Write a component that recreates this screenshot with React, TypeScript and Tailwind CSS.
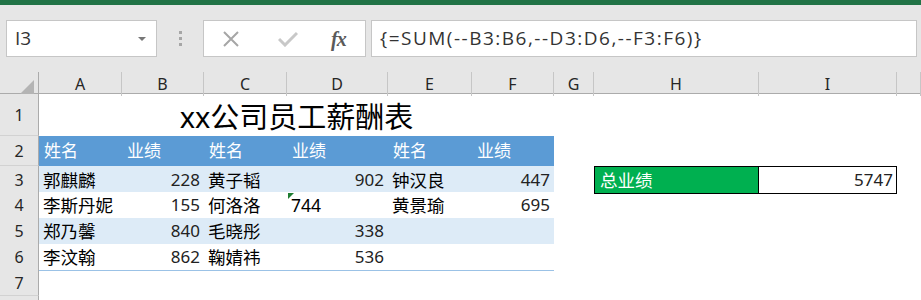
import React from "react";

type Cell = string | number;
type Row = { n: number; cells: Cell[]; band: boolean };

const rows: Row[] = [
  { n: 3, cells: ["郭麒麟", 228, "黄子韬", 902, "钟汉良", 447], band: true },
  { n: 4, cells: ["李斯丹妮", 155, "何洛洛", "744", "黄景瑜", 695], band: false },
  { n: 5, cells: ["郑乃馨", 840, "毛晓彤", 338, "", ""], band: true },
  { n: 6, cells: ["李汶翰", 862, "鞠婧祎", 536, "", ""], band: false },
];

const letters = ["A", "B", "C", "D", "E", "F", "G", "H", "I", ""];

function RowHead({ n }: { n?: number }) {
  return (
    <div className="flex items-center justify-center bg-[#e6e6e6] border-r border-r-[#ababab] border-b border-b-[#d2d2d2] text-[16px] text-[#262626]">
      {n}
    </div>
  );
}

export default function App() {
  return (
    <div className="w-[921px] h-[300px] overflow-hidden bg-white font-['Noto_Sans','Noto_Sans_CJK_SC',sans-serif]">
      {/* title bar strip */}
      <div className="h-[5px] bg-[#217346]" />

      {/* formula bar */}
      <div className="h-[67px] bg-[#e6e6e6] pt-[15px] pl-[6px] flex items-start">
        <div className="w-[151px] h-[37px] bg-white border border-[#c6c6c6] flex items-center justify-between pl-[8px] pr-[10px]">
          <span className="text-[19px] text-[#333] font-['Open_Sans',sans-serif]">I3</span>
          <span className="w-0 h-0 border-x-[4px] border-x-transparent border-t-[4px] border-t-[#777]" />
        </div>
        <div className="w-[46px] h-[37px] flex flex-col items-center justify-center gap-[3px]">
          <span className="w-[3px] h-[3px] bg-[#a6a6a6]" />
          <span className="w-[3px] h-[3px] bg-[#a6a6a6]" />
          <span className="w-[3px] h-[3px] bg-[#a6a6a6]" />
        </div>
        <div className="w-[163px] h-[37px] bg-white border border-[#c6c6c6] flex items-center">
          <svg width="18" height="18" viewBox="0 0 18 18" className="ml-[18px]">
            <path d="M2 2 L16 16 M16 2 L2 16" stroke="#a6a6a6" strokeWidth="2" fill="none" />
          </svg>
          <svg width="20" height="16" viewBox="0 0 20 16" className="ml-[38px]">
            <path d="M1 8 L7 14 L19 2" stroke="#c8c8c8" strokeWidth="3" fill="none" />
          </svg>
          <span className="ml-[33px] text-[20px] italic font-bold text-[#5a5a5a] font-['Liberation_Serif',serif] tracking-[-1px]">
            fx
          </span>
        </div>
        <div className="ml-[5px] w-[546px] h-[37px] bg-white border border-[#c6c6c6] flex items-center pl-[8px]">
          <span className="text-[19px] text-[#333] font-['Open_Sans',sans-serif] tracking-[1.5px]">
            {"{=SUM(--B3:B6,--D3:D6,--F3:F6)}"}
          </span>
        </div>
      </div>

      {/* column headers */}
      <div className="grid grid-cols-[39px_83px_82px_83px_101px_84px_82px_40px_165px_138px_1fr] h-[22px] bg-[#e6e6e6] border-b border-b-[#ababab]">
        <div className="relative border-r border-r-[#ababab]">
          <svg width="14" height="14" viewBox="0 0 14 14" className="absolute right-[4px] bottom-[2px]">
            <path d="M14 0 L14 14 L0 14 Z" fill="#b4b4b4" />
          </svg>
        </div>
        {letters.map((l, i) => (
          <div
            key={i}
            className="flex items-center justify-center border-r border-r-[#c6c6c6] text-[16px] text-[#262626]"
          >
            {l}
          </div>
        ))}
      </div>

      {/* row 1: title */}
      <div className="grid grid-cols-[39px_83px_82px_83px_101px_84px_82px_40px_165px_138px_1fr] h-[42px]">
        <RowHead n={1} />
        <div className="col-span-6 flex items-end justify-center pb-[5px] text-[29px] leading-none text-black">
          xx公司员工薪酬表
        </div>
        <div className="col-span-4" />
      </div>

      {/* row 2: table header */}
      <div className="grid grid-cols-[39px_83px_82px_83px_101px_84px_82px_40px_165px_138px_1fr] h-[30px]">
        <RowHead n={2} />
        {["姓名", "业绩", "姓名", "业绩", "姓名", "业绩"].map((h, i) => (
          <div key={i} className="bg-[#5b9bd5] text-white text-[17px] flex items-center pl-[5px]">
            {h}
          </div>
        ))}
        <div className="col-span-4" />
      </div>

      {/* data rows */}
      {rows.map((r) => (
        <div
          key={r.n}
          className="grid grid-cols-[39px_83px_82px_83px_101px_84px_82px_40px_165px_138px_1fr] h-[26px]"
        >
          <RowHead n={r.n} />
          {r.cells.map((c, i) => {
            const isNum = typeof c === "number";
            const textNum = r.n === 4 && i === 3;
            return (
              <div
                key={i}
                className={`relative flex items-center border-b border-b-[#9bc2e6] ${
                  r.band ? "bg-[#ddebf7]" : "bg-white"
                } ${isNum ? "justify-end pr-[4px] text-[17px] text-[#222]" : "pl-[4px] text-[17.5px] text-black"}`}
              >
                {textNum && (
                  <span className="absolute left-[1px] top-[1px] w-0 h-0 border-r-[6px] border-r-transparent border-t-[6px] border-t-[#1e7d32]" />
                )}
                {c}
              </div>
            );
          })}
          <div />
          {r.n === 3 ? (
            <>
              <div className="bg-[#00b050] border border-black flex items-center pl-[5px] text-white text-[17.5px]">
                总业绩
              </div>
              <div className="bg-white border-y border-r border-black flex items-center justify-end pr-[3px] text-[17px] text-[#222]">
                5747
              </div>
            </>
          ) : (
            <>
              <div />
              <div />
            </>
          )}
          <div />
        </div>
      ))}

      {/* empty rows */}
      <div className="grid grid-cols-[39px_83px_82px_83px_101px_84px_82px_40px_165px_138px_1fr] h-[26px]">
        <RowHead n={7} />
      </div>
      <div className="grid grid-cols-[39px_83px_82px_83px_101px_84px_82px_40px_165px_138px_1fr] h-[26px]">
        <RowHead />
      </div>
    </div>
  );
}
